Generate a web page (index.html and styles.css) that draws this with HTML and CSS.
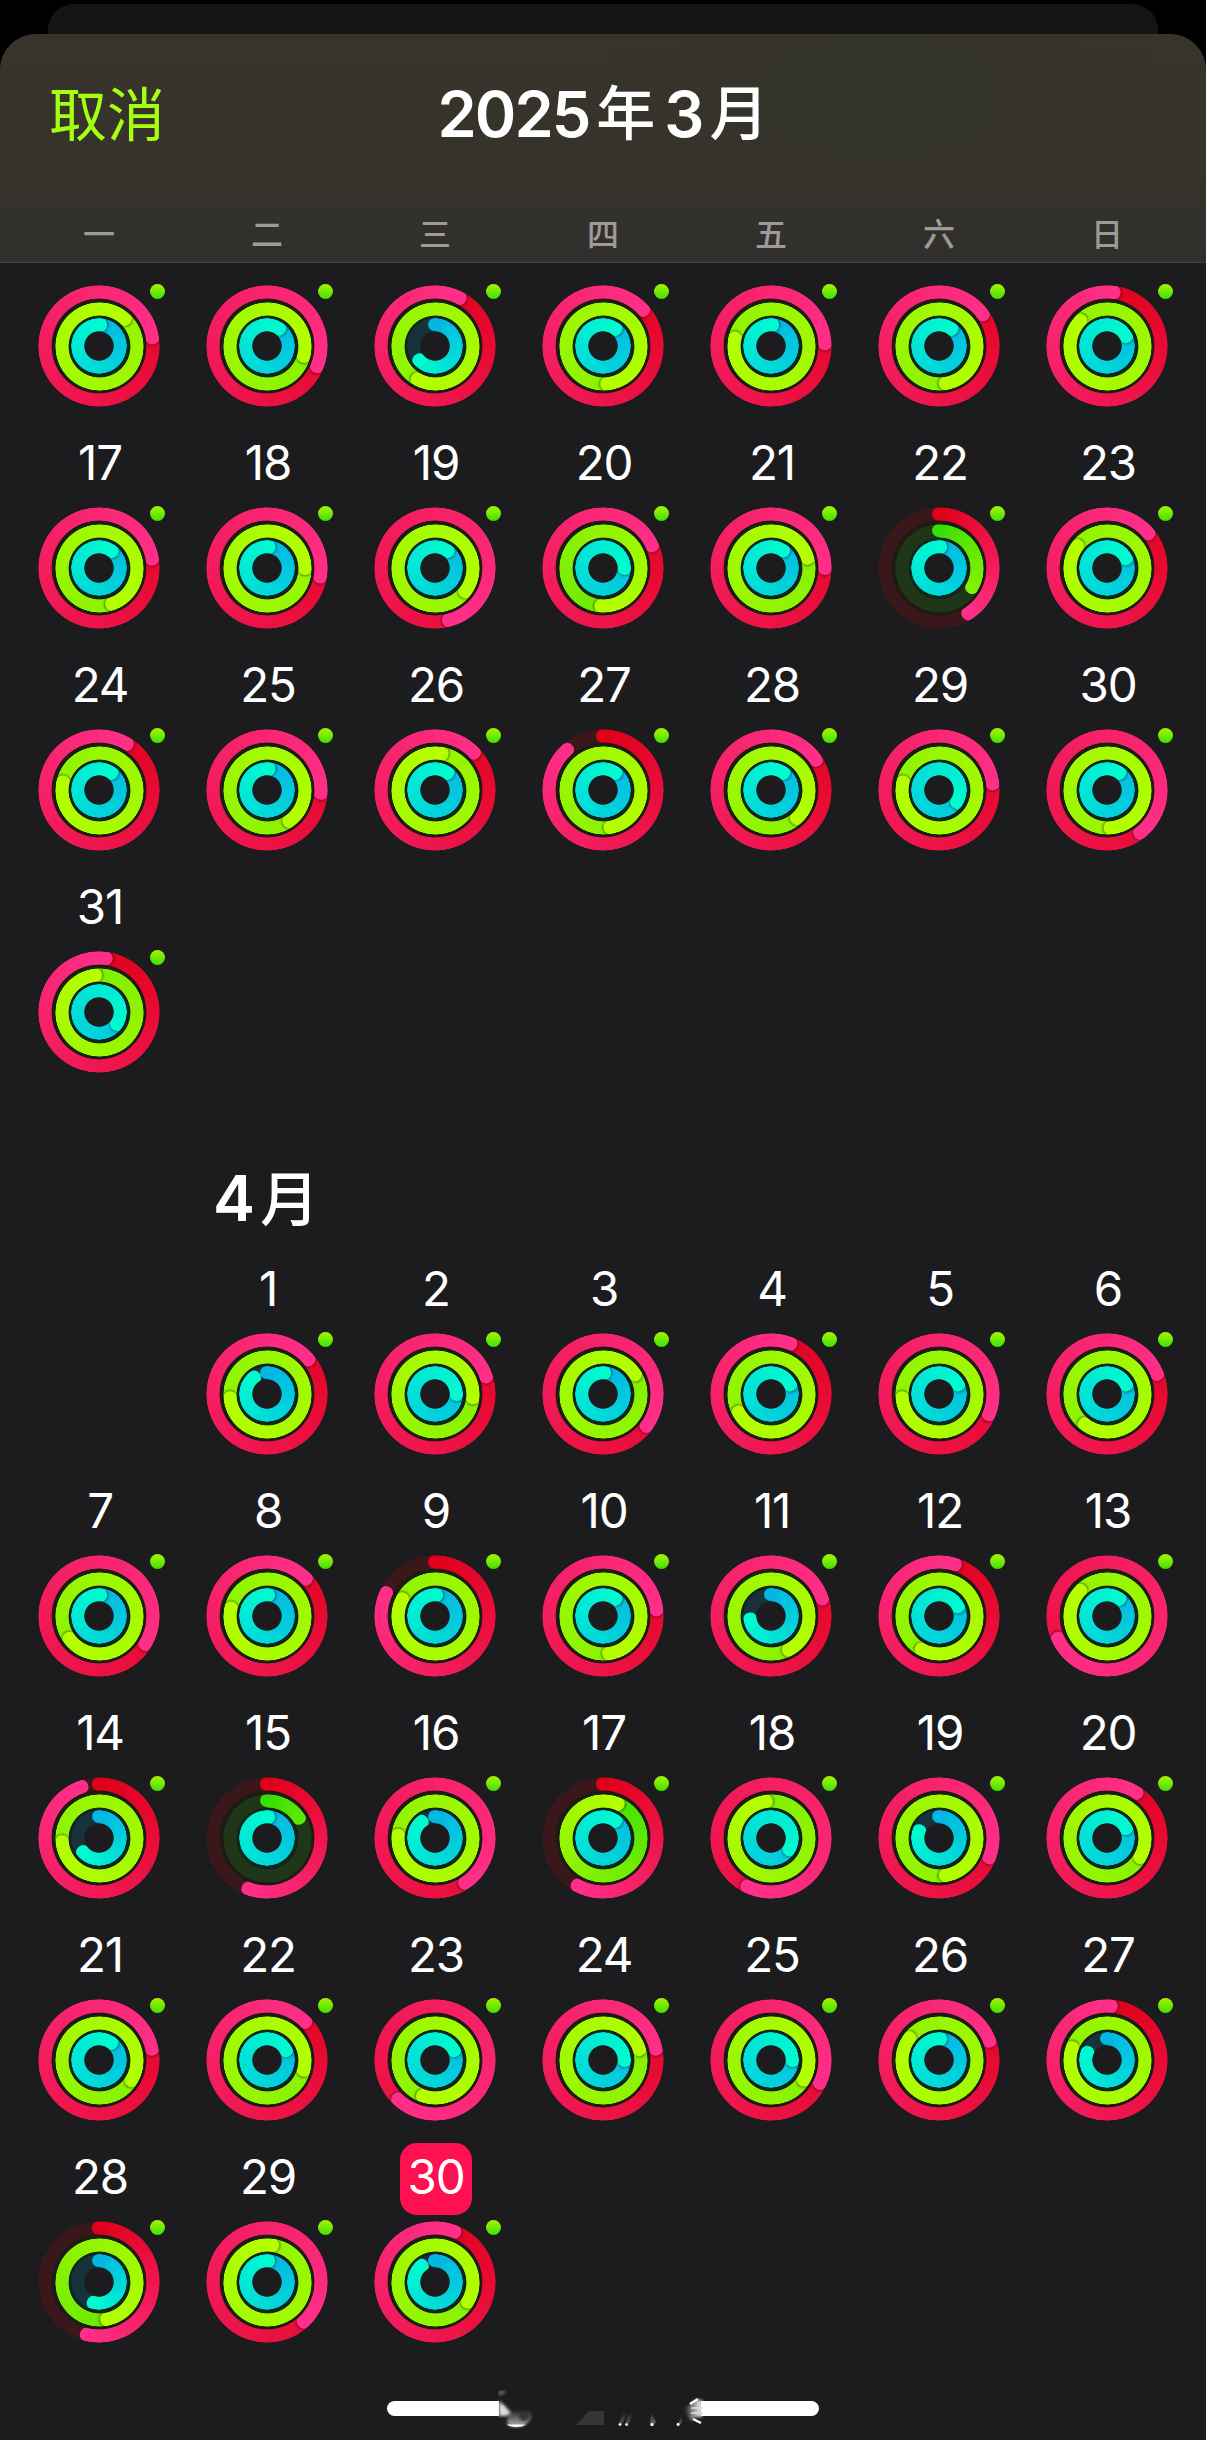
FILE: index.html
```
<!DOCTYPE html>
<html lang="zh-CN">
<head>
    <meta charset="utf-8">
    <meta name="viewport" content="width=device-width, initial-scale=1.0">
    <title>2025年3月</title>
    <link rel="stylesheet" href="styles.css">
</head>
<body>
<div class="back-card"></div>
<div class="sheet">
    <header class="header">
        <div class="topbar">
            <a class="cancel">取消</a>
            <h1 class="title">2025<span class="han">年</span>3<span class="han">月</span></h1>
        </div>
        <div class="weekdays">
            <span>一</span><span>二</span><span>三</span><span>四</span><span>五</span><span>六</span><span>日</span>
        </div>
    </header>
    <div class="month march" id="march"></div>
    <h2 class="month-title"><span>4<span class="han">月</span></span></h2>
    <div class="month" id="april"></div>
</div>
<div class="home-bar">
    <svg width="432" height="40" viewBox="0 0 432 40">
        <defs>
            <filter id="soft"><feGaussianBlur stdDeviation="1.6"/></filter>
            <linearGradient id="fadeUp" x1="0" y1="0" x2="0" y2="1">
                <stop offset="0" stop-color="#fff" stop-opacity="0"/>
                <stop offset="1" stop-color="#fff"/>
            </linearGradient>
            <linearGradient id="fadeLeft">
                <stop offset="0" stop-color="#fff" stop-opacity="0"/>
                <stop offset="1" stop-color="#fff"/>
            </linearGradient>
        </defs>
        <rect x="0" y="11" width="432" height="15" rx="7.5" fill="#fff"/>
        <rect x="112" y="0" width="202" height="40" fill="#1c1c1e"/>
        <path d="M112 11L118 16L124 23L119 26H112Z" fill="#ddd" filter="url(#soft)"/>
        <path d="M112 1H120L112 6Z" fill="#777" filter="url(#soft)"/>
        <path d="M122 20H144V28Q140 37 129 37Q123 37 120 34Z" fill="url(#fadeUp)" opacity=".7" filter="url(#soft)"/>
        <circle cx="137" cy="26" r="5" fill="#333" filter="url(#soft)"/>
        <path d="M120 34.500H139Q135 37 129 37Q123 37 120 34.500Z" fill="#fff"/>
        <path d="M202 21H217V35H189Z" fill="#363636"/>
        <path d="M231 35L237 22L241 22L234 36Z" fill="url(#fadeUp)" opacity=".3"/>
        <path d="M238 35L242 22L246 22L241 36Z" fill="url(#fadeUp)" opacity=".3"/>
        <path d="M263 35L264 22L269 32L266 36Z" fill="url(#fadeUp)" opacity=".4"/>
        <path d="M290 35L295 26L295 32L292 36Z" fill="url(#fadeUp)" opacity=".4"/>
        <g fill="#fff"><circle cx="233" cy="34.500" r="1.300"/><circle cx="239.500" cy="34.500" r="1.300"/><circle cx="265" cy="34.500" r="1.600"/><circle cx="291" cy="34.500" r="1.400"/></g>
        <path d="M297 19L309 10H315V27H309L304 31Z" fill="url(#fadeLeft)" filter="url(#soft)"/>
        <path d="M303 14L311 9M306 29L314 33" stroke="#fff" stroke-width="2.500"/>
        <path d="M304 18H316M304 23H316" stroke="#ddd" stroke-width="1.500"/>
    </svg>
</div>

<script>
    // each day: [number, move, exercise, stand, no dot], rings in degrees, 360 = goal reached
    let march = [
        ['', 441, 1123, 363], ['', 472, 825, 394], ['', 387, 929, 229], ['', 408, 895, 395], ['', 447, 1003, 363], ['', 414, 891, 395], ['', 367, 1034, 422],
        [17, 440, 881, 396], [18, 459, 1170, 364], [19, 525, 1208, 396], [20, 425, 544, 450], [21, 450, 794, 394], [22, 147, 120, 363], [23, 410, 1027, 422],
        [24, 391, 1003, 395], [25, 453, 865, 364], [26, 406, 1090, 395], [27, 318, 890, 395], [28, 416, 858, 395], [29, 443, 1003, 484], [30, 502, 1256, 395],
        [31, 367, 714, 484]
    ]
    let april = [
        [1, 410, 985, 322], [2, 431, 815, 450], [3, 486, 778, 363], [4, 381, 962, 423], [5, 472, 985, 423], [6, 428, 938, 423],
        [7, 481, 954, 363], [8, 406, 1003, 363], [9, 295, 1018, 363], [10, 443, 892, 395], [11, 431, 873, 262], [12, 377, 929, 422], [13, 605, 1034, 395],
        [14, 341, 985, 230], [15, 200, 57, 363, true], [16, 506, 995, 321], [17, 208, 383, 395], [18, 566, 712, 482], [19, 471, 891, 290], [20, 393, 840, 422],
        [21, 438, 842, 395], [22, 405, 825, 422], [23, 583, 920, 422], [24, 438, 793, 450], [25, 475, 841, 450], [26, 429, 1027, 363], [27, 364, 1010, 291],
        [28, 193, 529, 196], [29, 497, 1088, 363], [30, 381, 841, 321]
    ]

    function ring(name, total) {
        let type = total < 360 ? 'part' : 'full'
        return `<div class="ring ${name} ${type}" style="--total:${total}deg;--tip:${total % 360}deg;--done:${Math.min(total / 2, 100)}%"><i class="start"></i><i class="tip"></i></div>`
    }

    function fill(id, days, today) {
        let html = ''
        for (let d of days) {
            html += `<div class="day">`
            if (d[0]) {
                html += `<div class="num ${d[0] == today ? 'today' : ''}">${d[0]}</div>`
            }
            html += `<div class="rings">${ring('move', d[1])}${ring('exercise', d[2])}${ring('stand', d[3])}`
            if (!d[4]) html += `<b class="dot"></b>`
            html += `</div></div>`
        }
        document.getElementById(id).innerHTML = html
    }

    fill('march', march)
    fill('april', april, 30)
    // April 2025 starts on a Tuesday
    document.querySelector('#april .day').classList.add('tuesday')
</script>
</body>
</html>
```
FILE: styles.css
```
* {
    box-sizing: border-box;
}
body {
    margin: 0;
    padding-top: 4px;
    height: 2440px;
    overflow: hidden;
    background: #000;
    color: #fff;
    font-family: Inter, "Noto Sans CJK SC", sans-serif;
}
.back-card {
    height: 30px;
    margin: 0 48px;
    border-radius: 26px 26px 0 0;
    background: #141416;
}
.sheet {
    height: 2406px;
    border-radius: 36px 36px 0 0;
    background: #1c1c1e;
    overflow: hidden;
}
.header {
    height: 229px;
    border-bottom: 1px solid #444446;
    background:
        radial-gradient(ellipse 300px 150px at 880px 50px, rgba(49, 51, 39, .6), transparent),
        linear-gradient(#38342b, #36332b 60%, #302f2d);
}
.topbar {
    display: grid;
    grid-template-columns: 1fr auto 1fr;
    align-items: center;
    height: 160px;
    padding: 0 49px;
}
.cancel {
    color: #a6ff12;
    font-size: 58px;
    line-height: 80px;
    padding-top: 2px;
}
.title, .month-title {
    margin: 0;
    font-size: 63px;
    font-weight: 600;
    line-height: 80px;
    letter-spacing: -2px;
}
.title {
    display: flex;
}
.han {
    font-size: 59px;
    font-weight: 500;
    margin: 0 9px 0 7px;
    letter-spacing: 0;
}
.title .han:last-child {
    margin-right: 0;
}
.weekdays {
    display: grid;
    grid-template-columns: repeat(7, 168px);
    padding: 1px 15px 0;
    text-align: center;
    font-size: 32px;
    font-weight: 500;
    line-height: 80px;
    color: #9c9b99;
}
.month {
    display: grid;
    grid-template-columns: repeat(7, 168px);
    padding: 0 15px;
}
.march {
    padding-top: 22px;
}
.month-title {
    display: grid;
    grid-template-columns: repeat(7, 168px);
    height: 160px;
    padding: 63px 15px 0;
}
.month-title > span {
    grid-column: 2;
    padding-left: 30px;
    white-space: nowrap;
}
.day {
    display: flex;
    flex-direction: column;
    align-items: center;
    gap: 6px;
    padding-bottom: 22px;
}
.tuesday {
    grid-column: 2;
}
.num {
    width: 72px;
    height: 72px;
    margin-left: 2px;
    border-radius: 17px;
    font-size: 47.5px;
    line-height: 68px;
    letter-spacing: -1.2px;
    text-align: center;
}
.today {
    background: #ff1050;
}
.rings {
    position: relative;
    width: 122px;
    height: 122px;
    border-radius: 50%;
    /* dark seams between the rings */
    background: radial-gradient(circle, #1c1c1e 14px, #10251f 15px, #10251c 31px, #1c1c12 40px, #1c1c12 50px, transparent 52px);
}
.ring {
    position: absolute;
    inset: calc(61px - var(--r));
    border-radius: 50%;
    -webkit-mask: radial-gradient(circle closest-side, transparent calc(var(--r) - 14px), #000 calc(var(--r) - 13.2px), #000 calc(var(--r) - .8px), transparent var(--r));
    mask: radial-gradient(circle closest-side, transparent calc(var(--r) - 14px), #000 calc(var(--r) - 13.2px), #000 calc(var(--r) - .8px), transparent var(--r));
}
.move {
    --r: 61px;
    --from: #e0001a;
    --to: #ff2f89;
    --track: #3a171b;
}
.exercise {
    --r: 44.5px;
    --from: #36df05;
    --to: color-mix(in srgb, #b4ff00 var(--done), #36df05);
    --track: #1f3718;
}
.stand {
    --r: 28.3px;
    --from: #04b6e2;
    --to: #00fbd0;
    --track: #17323a;
}
.full {
    background: conic-gradient(from var(--tip), var(--from) calc(360deg - var(--total)), var(--to) 360deg);
}
.part {
    background: conic-gradient(var(--from) 0deg, var(--to) var(--tip), var(--track) var(--tip));
}
.start, .tip {
    position: absolute;
    inset: 0;
}
.tip {
    transform: rotate(var(--tip));
}
.start::after, .tip::after {
    content: "";
    position: absolute;
    left: calc(50% - 6.6px);
    top: .4px;
    width: 13.2px;
    height: 13.2px;
    border-radius: 50%;
}
.start::after {
    background: var(--from);
}
.tip::after {
    background: var(--to);
}
.full .start {
    display: none;
}
.full .tip::after {
    box-shadow: 1.5px 0 2px rgba(0, 0, 0, .35);
}
.dot {
    position: absolute;
    left: 111px;
    top: -1px;
    width: 15px;
    height: 15px;
    margin-left: 1px;
    border-radius: 50%;
    background: linear-gradient(#a8f500, #3fe003);
}
.home-bar {
    position: absolute;
    left: 387px;
    top: 2390px;
    width: 432px;
    height: 40px;
}
```
